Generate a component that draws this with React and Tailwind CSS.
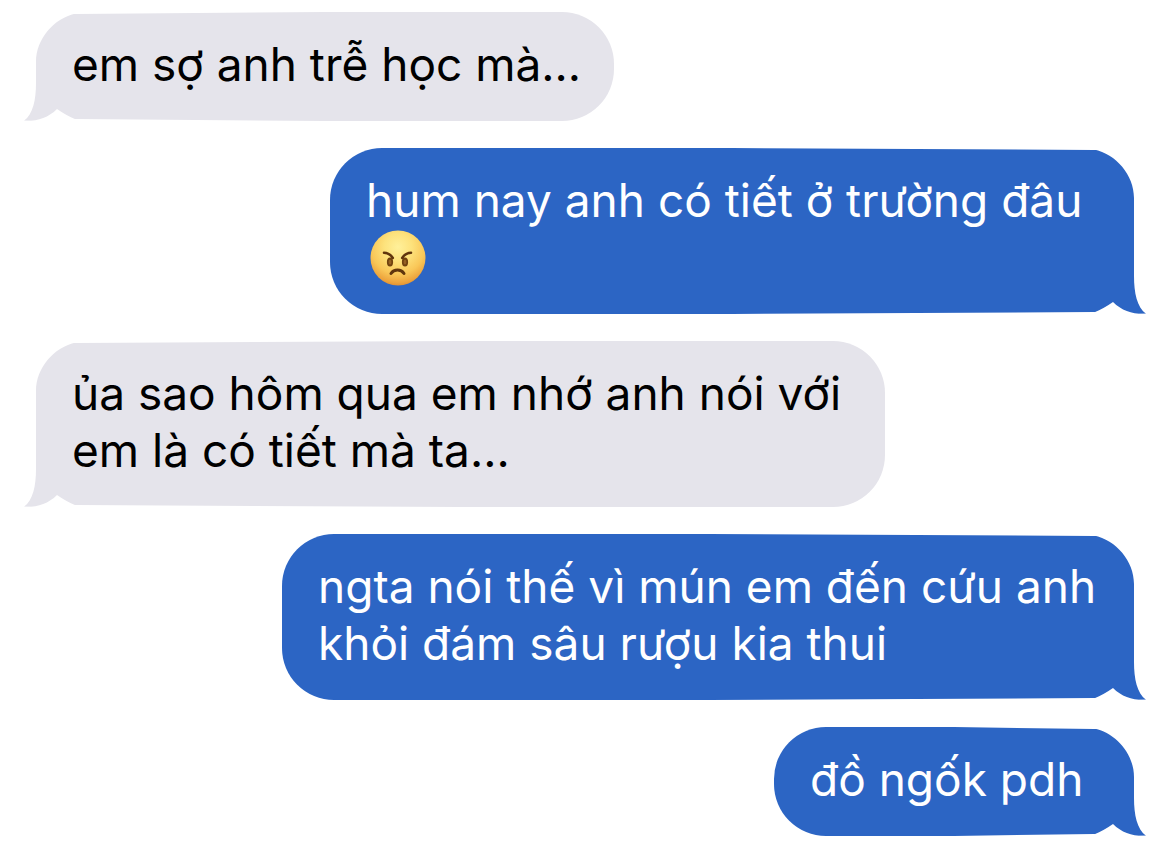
import React from 'react';
import clsx from 'clsx';

const AngryFace = () => (
  <svg
    role="img"
    aria-label="angry face"
    viewBox="0 0 56 56"
    className="ml-1 h-14 w-14"
  >
    <defs>
      <radialGradient id="face" cx="50%" cy="30%" r="72%">
        <stop offset="0%" stopColor="#fff09a" />
        <stop offset="35%" stopColor="#fde27c" />
        <stop offset="68%" stopColor="#f9c758" />
        <stop offset="90%" stopColor="#eda33c" />
        <stop offset="100%" stopColor="#dd8b30" />
      </radialGradient>
    </defs>
    <circle cx="28" cy="28" r="27.5" fill="url(#face)" />
    <ellipse cx="20" cy="32" rx="3.1" ry="4.6" fill="#70420f" />
    <ellipse cx="35" cy="32" rx="3.1" ry="4.6" fill="#70420f" />
    <ellipse cx="20" cy="32" rx="1.4" ry="2.5" fill="#956024" />
    <ellipse cx="35" cy="32" rx="1.4" ry="2.5" fill="#956024" />
    <g fill="none" stroke="#60350d" strokeLinecap="round" strokeWidth="2.6">
      <path d="M14 22.8 C17.5 22.8 20.5 24.5 22.8 28" />
      <path d="M41 22.8 C37.5 22.8 34.5 24.5 32.2 28" />
      <path d="M21 43.5 C24 38.8 31 38.8 34 43.5" strokeWidth="3" />
    </g>
  </svg>
);

const messages = [
  { id: 1, from: 'them', width: 'w-[578px]', lines: ['em sợ anh trễ học mà...'] },
  { id: 2, from: 'me', width: 'w-[804px]', lines: ['hum nay anh có tiết ở trường đâu'], emoji: true },
  { id: 3, from: 'them', width: 'w-[849px]', lines: ['ủa sao hôm qua em nhớ anh nói với', 'em là có tiết mà ta...'] },
  { id: 4, from: 'me', width: 'w-[852px]', lines: ['ngta nói thế vì mún em đến cứu anh', 'khỏi đám sâu rượu kia thui'] },
  { id: 5, from: 'me', width: 'w-[360px]', lines: ['đồ ngốk pdh'] },
];

// Drawn for the right-hand side; received messages flip it.
const BubbleShape = ({ mine }) => (
  <div
    aria-hidden="true"
    className={clsx(
      'absolute inset-0 -z-10',
      mine ? 'text-[#2c65c4]' : '-scale-x-100 text-[#e5e4eb]'
    )}
  >
    <div className="h-full rounded-l-[52px] bg-current [clip-path:polygon(0_0,50%_0,calc(100%_-_40px)_2px,100%_2px,100%_100%,calc(100%_-_20px)_100%,calc(100%_-_40px)_calc(100%_-_2px),50%_100%,0_100%)]" />
    <svg viewBox="0 0 40 50" className="absolute top-0 right-0 h-[50px] w-10">
      <path d="M0 0 L0 1.5 C22 6 40 27 40 50 L40 0 Z" fill="white" />
    </svg>
    <svg viewBox="0 0 60 50" className="absolute -right-3 bottom-0 h-[50px] w-[60px]">
      <path d="M46 12 L48 12 C48 29 51 43 60 49.8 L46 50 Z" fill="currentColor" />
      <path d="M8 48.4 C15 46 21 42 27 38 C36 47 47 50.4 60 49.8 L60 51 L8 51 Z" fill="white" />
    </svg>
  </div>
);

const Message = ({ message }) => {
  const mine = message.from === 'me';
  return (
    <li
      className={clsx(
        'relative isolate max-w-full pt-6 pb-7 pl-9',
        message.width,
        mine ? 'self-end text-white' : 'self-start text-black'
      )}
    >
      <BubbleShape mine={mine} />
      {message.lines.map((line) => (
        <p key={line} className="whitespace-nowrap">{line}</p>
      ))}
      {message.emoji && (
        <div className="flex h-[57px] items-center">
          <AngryFace />
        </div>
      )}
    </li>
  );
};

const App = () => {
  return (
    <main className="min-h-screen overflow-hidden bg-white px-9 py-3 font-['Inter','Noto_Sans',sans-serif] text-[46px] leading-[57px]">
      <ul className="flex flex-col gap-[27px]">
        {messages.map((message) => (
          <Message key={message.id} message={message} />
        ))}
      </ul>
    </main>
  );
};

export default App;
